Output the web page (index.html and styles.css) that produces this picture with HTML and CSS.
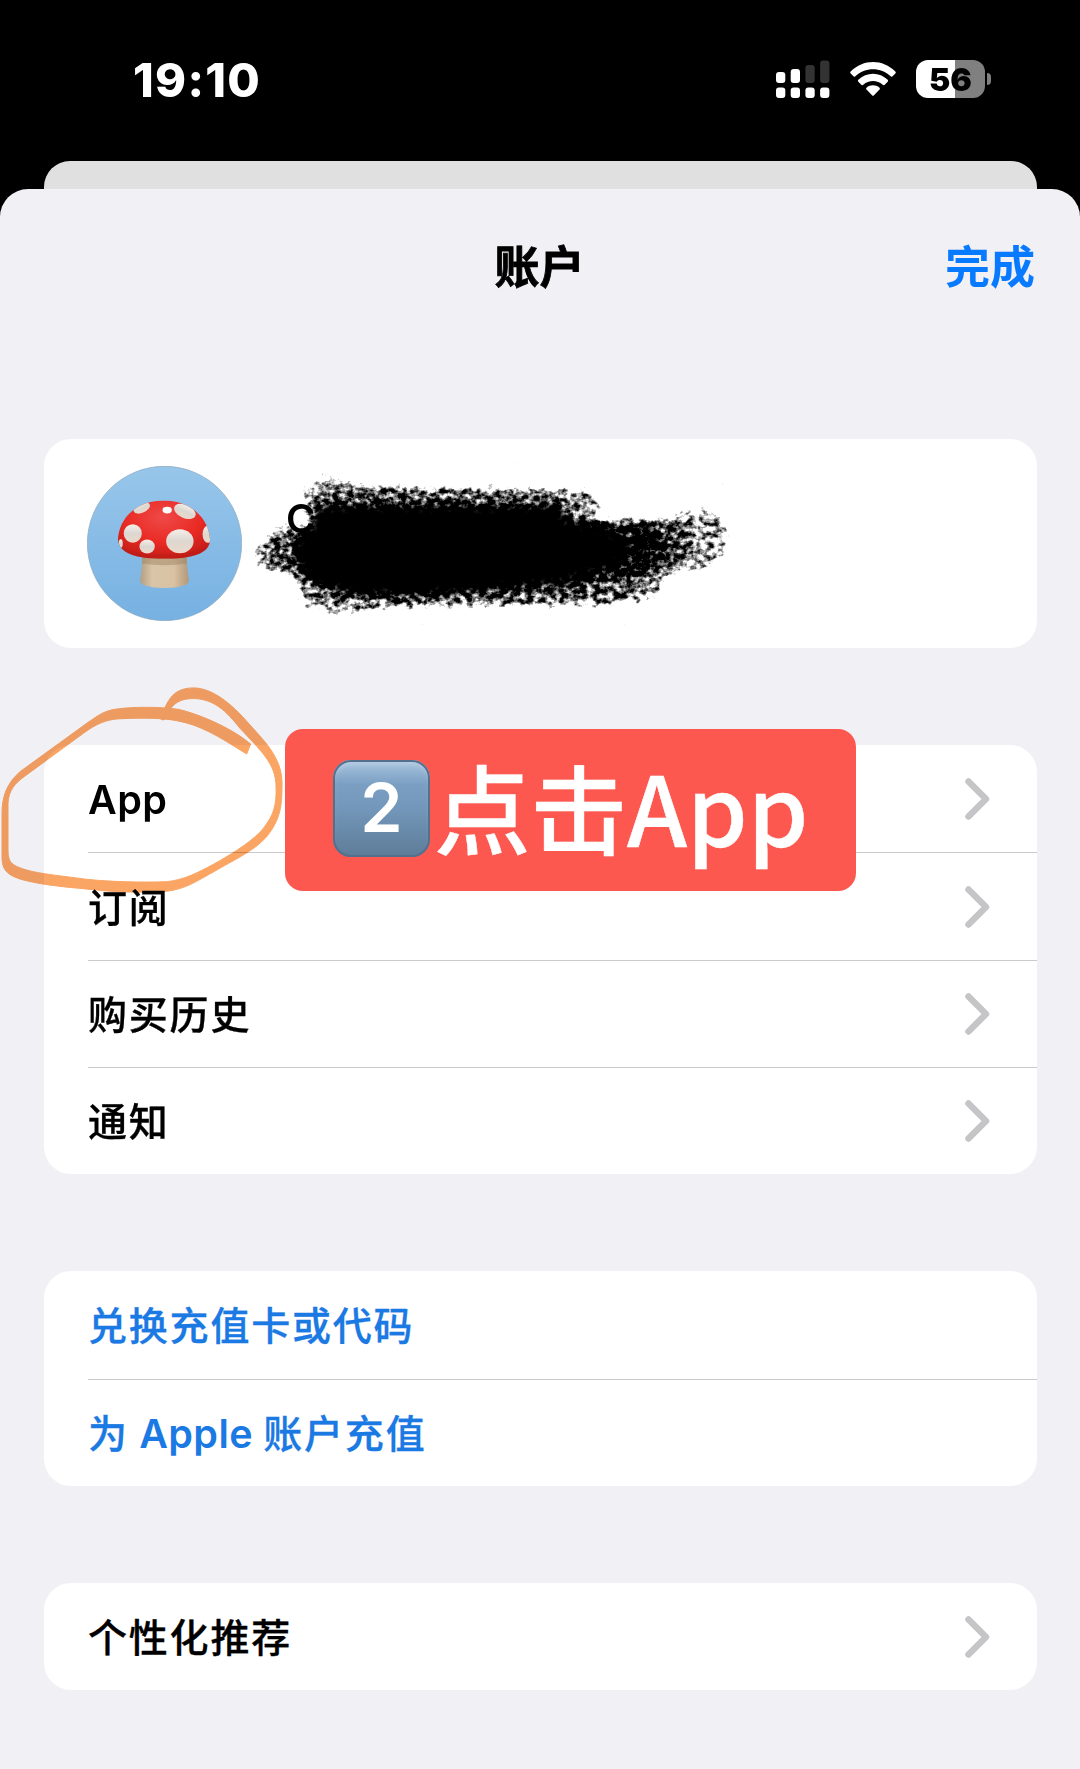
FILE: index.html
```html
<!DOCTYPE html>
<html lang="zh-CN">
	<head>
		<meta charset="UTF-8" />
		<meta name="viewport" content="width=device-width, initial-scale=1.0" />
		<title>账户</title>
		<link rel="stylesheet" href="styles.css">
	</head>
	<body>
		<!-- Status bar: Begin -->
		<div class="status-bar">
			<span class="time">19:10</span>
			<div class="status-icons">
				<svg class="signal" width="54" height="38" viewBox="0 0 54 38">
					<g fill="#fff">
						<rect x="0" y="12" width="9.3" height="11" rx="3" />
						<rect x="14.7" y="9" width="9.3" height="14" rx="3" />
						<rect x="0" y="27.6" width="9.3" height="10.4" rx="3" />
						<rect x="14.7" y="27.6" width="9.3" height="10.4" rx="3" />
						<rect x="29.4" y="27.6" width="9.3" height="10.4" rx="3" />
						<rect x="44.1" y="27.6" width="9.3" height="10.4" rx="3" />
					</g>
					<g fill="#333">
						<rect x="29.4" y="5" width="9.3" height="18" rx="3" />
						<rect x="44.1" y="0.5" width="9.3" height="22.5" rx="3" />
					</g>
				</svg>
				<svg class="wifi" width="46" height="35" viewBox="0 0 46 35" fill="#fff">
					<path d="M0.7 9.6C13-3.2 33-3.2 45.3 9.6Q46.3 10.6 45.3 11.6L42.6 14.3Q41.7 15.2 40.7 14.2C31 4.8 15 4.8 5.3 14.2Q4.3 15.2 3.4 14.3L0.7 11.6Q-0.3 10.6 0.7 9.6Z" />
					<path d="M8.3 17.8C16.5 9.8 29.5 9.8 37.7 17.8Q38.6 18.8 37.7 19.7L34.5 22.9Q33.6 23.7 32.7 22.8C27.2 17.8 18.8 17.8 13.3 22.8Q12.4 23.7 11.5 22.9L8.3 19.7Q7.4 18.8 8.3 17.8Z" />
					<path d="M16.5 25.7C20.2 22.5 25.8 22.5 29.5 25.7Q30.4 26.5 29.5 27.5L24 33.3Q23 34.3 22 33.3L16.5 27.5Q15.6 26.5 16.5 25.7Z" />
				</svg>
				<div class="battery"><span>56</span></div>
				<div class="battery-cap"></div>
			</div>
		</div>
		<!-- Status bar: End -->

		<div class="sheet-back"></div>
		<div class="sheet">
			<div class="sheet-header">
				<h1>账户</h1>
				<a class="done">完成</a>
			</div>

			<!-- Profile: Begin -->
			<div class="card profile">
				<svg class="avatar" viewBox="52 48 464 464">
					<defs>
						<linearGradient id="sky" x1="0" y1="0" x2="0" y2="1">
							<stop offset="0" stop-color="#98c6ea" />
							<stop offset="1" stop-color="#76b1e2" />
						</linearGradient>
						<radialGradient id="cap" cx="0.48" cy="0.3" r="0.65">
							<stop offset="0" stop-color="#ee4a48" />
							<stop offset="0.6" stop-color="#ea2a24" />
							<stop offset="1" stop-color="#c51e18" />
						</radialGradient>
						<linearGradient id="stem" x1="0" y1="0" x2="1" y2="0">
							<stop offset="0" stop-color="#b39e82" />
							<stop offset="0.25" stop-color="#d9c5a7" />
							<stop offset="0.7" stop-color="#d8c2a3" />
							<stop offset="1" stop-color="#b29777" />
						</linearGradient>
						<linearGradient id="spot" x1="0" y1="0" x2="0" y2="1">
							<stop offset="0" stop-color="#f4efe9" />
							<stop offset="0.5" stop-color="#dcd7d0" />
							<stop offset="1" stop-color="#ecd9cb" />
						</linearGradient>
						<clipPath id="capClip">
							<path d="M145 262C151 200 204 151 282 151C360 151 414 202 420 264C424 306 374 326 283 326C192 326 142 306 145 262Z" />
						</clipPath>
					</defs>
					<circle cx="284" cy="280" r="231" fill="url(#sky)" stroke="#88a6bc" stroke-width="2" />
					<path d="M218 312L350 312Q350 350 357 392Q354 412 284 413Q214 412 211 392Q218 350 218 312Z" fill="url(#stem)" />
					<path d="M218 322H350L351 340Q284 350 217 340Z" fill="#9b7e60" opacity="0.45" />
					<g clip-path="url(#capClip)">
						<rect x="140" y="145" width="290" height="190" fill="url(#cap)" />
						<path d="M145 290Q200 315 283 312Q370 314 420 286V330H145Z" fill="#b51b16" opacity="0.3" />
						<g fill="url(#spot)">
							<ellipse cx="216" cy="174" rx="26" ry="14" transform="rotate(-24 216 174)" />
							<ellipse cx="292" cy="180" rx="14" ry="10" fill="#fff" />
							<ellipse cx="345" cy="184" rx="34" ry="20" transform="rotate(24 345 184)" />
							<ellipse cx="189" cy="250" rx="27" ry="28" />
							<ellipse cx="232" cy="289" rx="23" ry="21" />
							<ellipse cx="330" cy="273" rx="41" ry="36" />
							<ellipse cx="414" cy="252" rx="16" ry="26" />
							<ellipse cx="153" cy="280" rx="6" ry="13" />
						</g>
					</g>
				</svg>
				<div class="profile-name">
					<span>C</span>
					<svg class="scribble" width="500" height="170" viewBox="0 0 1500 510">
						<defs>
							<filter id="grain" x="0" y="0" width="1500" height="510" filterUnits="userSpaceOnUse" color-interpolation-filters="sRGB">
								<feGaussianBlur in="SourceGraphic" stdDeviation="9" result="soft" />
								<feTurbulence type="fractalNoise" baseFrequency="0.05 0.06" numOctaves="3" seed="7" />
								<feColorMatrix values="0 0 0 0 0  0 0 0 0 0  0 0 0 0 0  0 0 0 1 0" result="noise" />
								<feComposite in="soft" in2="noise" operator="arithmetic" k1="0" k2="1.55" k3="1.6" k4="-1.42" />
								<feComponentTransfer><feFuncA type="linear" slope="1.8" /></feComponentTransfer>
								<feGaussianBlur stdDeviation="1.5" />
							</filter>
							<filter id="smudge"><feGaussianBlur stdDeviation="9" /></filter>
						</defs>
						<g filter="url(#grain)">
							<path d="M185 85L262 45L330 70L620 80L960 88L1050 85L1084 125L1075 180L1290 168L1395 145L1445 175L1468 220L1450 290L1400 328L1290 342L1245 420L1100 440L700 442L430 450L310 465L190 445L175 385L145 347L58 335L42 270L95 215L110 190L200 195Z" fill="#000" fill-opacity="0.52" />
							<path d="M240 85L340 85L980 92L1000 165L1120 178L1340 185L1360 250L1320 310L1230 350L1160 415L800 425L560 425L400 430L230 415L180 340L80 310L90 240L215 210Z" fill="#000" fill-opacity="0.3" />
							<path d="M235 135L960 135L965 175L1120 190L1260 205L1290 260L1270 300L1180 345L960 370L800 395L560 405L400 415L260 390L170 340L150 240L215 205Z" fill="#000" fill-opacity="0.6" />
						</g>
						<path filter="url(#smudge)" d="M240 145L960 143L970 180L1130 225L1180 270L1110 320L950 368L800 375L520 400L320 392L190 335L170 250L215 210Z" />
					</svg>
				</div>
			</div>
			<!-- Profile: End -->

			<div class="card list">
				<div class="row"><span class="latin">App</span><svg class="chevron" viewBox="0 0 25 42"><path d="M3.5 3.5L21 21L3.5 38.5" /></svg></div>
				<div class="row"><span>订阅</span><svg class="chevron" viewBox="0 0 25 42"><path d="M3.5 3.5L21 21L3.5 38.5" /></svg></div>
				<div class="row"><span>购买历史</span><svg class="chevron" viewBox="0 0 25 42"><path d="M3.5 3.5L21 21L3.5 38.5" /></svg></div>
				<div class="row"><span>通知</span><svg class="chevron" viewBox="0 0 25 42"><path d="M3.5 3.5L21 21L3.5 38.5" /></svg></div>

				<!-- hand-drawn circle and step label over the first row -->
				<svg class="marker" viewBox="0 0 900 840">
					<path d="M752 222C690 170 590 130 535 118C480 110 400 110 350 117C310 122 290 140 260 160L60 305C20 340 6 380 6 430V560C6 600 20 615 70 630C140 648 220 653 290 660C360 668 440 668 500 664C560 657 600 627 640 606C700 570 760 545 800 500C840 450 846 410 846 350C850 270 800 220 750 165C690 95 640 60 590 54C520 50 500 90 483 148L492 150C510 110 530 88 570 86C640 82 680 125 720 175C780 240 828 280 828 350C830 410 820 440 780 487C740 525 690 555 640 583C590 610 550 630 500 635C420 638 330 635 260 628C190 618 120 612 80 600C30 585 25 575 24 540V400C26 360 45 340 75 318L250 190C290 160 320 150 350 147C400 144 480 142 530 152C600 165 650 195 740 252Z" />
				</svg>
				<div class="callout">
					<span class="keycap">2</span>
					<span class="step">点击App</span>
				</div>
			</div>

			<div class="card list links">
				<div class="row"><span>兑换充值卡或代码</span></div>
				<div class="row"><span>为<span class="latin"> Apple </span>账户充值</span></div>
			</div>

			<div class="card list">
				<div class="row"><span>个性化推荐</span><svg class="chevron" viewBox="0 0 25 42"><path d="M3.5 3.5L21 21L3.5 38.5" /></svg></div>
			</div>
		</div>
	</body>
</html>
```

FILE: styles.css
```css
* {
	box-sizing: border-box;
}

body {
	margin: 0;
	height: 1769px;
	overflow: hidden;
	background: #000;
	color: #000;
	font-family: Inter, "Noto Sans CJK SC", sans-serif;
}

/* Status bar */
.status-bar {
	height: 161px;
	padding: 0 89px 0 133px;
	display: flex;
	justify-content: space-between;
	align-items: flex-start;
	color: #fff;
}

.time {
	margin-top: 51px;
	font-size: 47px;
	line-height: 57px;
	font-weight: 800;
	letter-spacing: 1.3px;
}

.status-icons {
	display: flex;
	align-items: center;
	margin-top: 60px;
	height: 38px;
}

.wifi {
	margin: 0 20px 0 20px;
}

.battery {
	width: 69px;
	height: 38px;
	border-radius: 12px;
	background: linear-gradient(to right, #fff 39px, #808080 39px);
	color: #000;
	font-size: 32px;
	line-height: 39px;
	font-weight: 900;
	text-align: center;
}

.battery-cap {
	width: 4px;
	height: 12px;
	margin-left: 2px;
	border-radius: 0 4px 4px 0;
	background: #808080;
}

/* Sheets */
.sheet-back {
	height: 28px;
	margin: 0 43px 0 44px;
	border-radius: 26px 26px 0 0;
	background: #e0e0e1;
}

.sheet {
	height: 1580px;
	padding: 0 43px 0 44px;
	border-radius: 28px 28px 0 0;
	background: #f1f0f5;
}

.sheet-header {
	height: 250px;
	padding-top: 47px;
	display: grid;
	grid-template-columns: 1fr auto 1fr;
	align-items: start;
	font-size: 45px;
	line-height: 64px;
}

h1 {
	grid-column: 2;
	margin: 0 2px 0 0;
	font-size: inherit;
	font-weight: 700;
	-webkit-text-stroke: 0.8px;
}

.done {
	justify-self: end;
	margin-right: 2px;
	color: #087aff;
	font-weight: 700;
}

.card {
	background: #fff;
	border-radius: 27px;
	margin-bottom: 97.3px;
}

.profile {
	height: 209px;
	padding: 0 43px;
	display: flex;
	align-items: center;
}

.avatar {
	width: 155px;
	height: 155px;
}

.profile-name {
	position: relative;
	margin: -50px 0 0 44px;
	font-size: 40px;
	line-height: 48px;
	font-weight: 600;
}

.scribble {
	position: absolute;
	left: -46px;
	top: -35px;
}

/* Rows */
.list {
	position: relative;
	padding-left: 44px;
}

.row {
	height: 107.2px;
	padding-right: 47px;
	display: flex;
	justify-content: space-between;
	align-items: center;
	font-size: 39px;
	line-height: 56px;
	font-weight: 500;
	letter-spacing: 1.8px;
	-webkit-text-stroke: 0.3px;
}

.row > span {
	padding-top: 3px;
}

.row + .row {
	border-top: 1.5px solid #cbcbcd;
}

.latin {
	font-weight: 600;
	font-size: 39.5px;
	letter-spacing: 0.4px;
	-webkit-text-stroke: 0;
}

.links {
	color: #1b79e3;
}

.chevron {
	width: 25px;
	height: 42px;
	margin-top: 1px;
	fill: none;
	stroke: #c5c5c7;
	stroke-width: 6.5;
	stroke-linecap: round;
	stroke-linejoin: round;
}

/* Annotations */
.marker {
	position: absolute;
	left: -44px;
	top: -75px;
	width: 300px;
	height: 280px;
	fill: #fba564;
	stroke: #fba564;
	stroke-width: 3;
	mix-blend-mode: multiply;
}

.callout {
	position: absolute;
	left: 241px;
	top: -16px;
	width: 571px;
	height: 162px;
	padding-left: 48px;
	border-radius: 18px;
	background: #fc5850;
	color: #fff;
	display: flex;
	align-items: center;
	font-family: "Noto Sans CJK SC", sans-serif;
	font-size: 96.5px;
	font-weight: 500;
}

.step {
	line-height: 140px;
	padding-bottom: 10px;
	-webkit-text-stroke: 0.4px;
}

.keycap {
	width: 97px;
	height: 97px;
	margin: -3px 4px 0 0;
	border-radius: 18px;
	background: linear-gradient(#a9c5df, #7b9fc3 25%, #7397ba 50%, #5d7c98);
	box-shadow: inset 0 0 0 2px #55708d, inset 0 5px 5px rgba(255, 255, 255, 0.2);
	font-family: Inter, sans-serif;
	font-size: 68px;
	line-height: 95px;
	font-weight: 600;
	text-align: center;
}
```
